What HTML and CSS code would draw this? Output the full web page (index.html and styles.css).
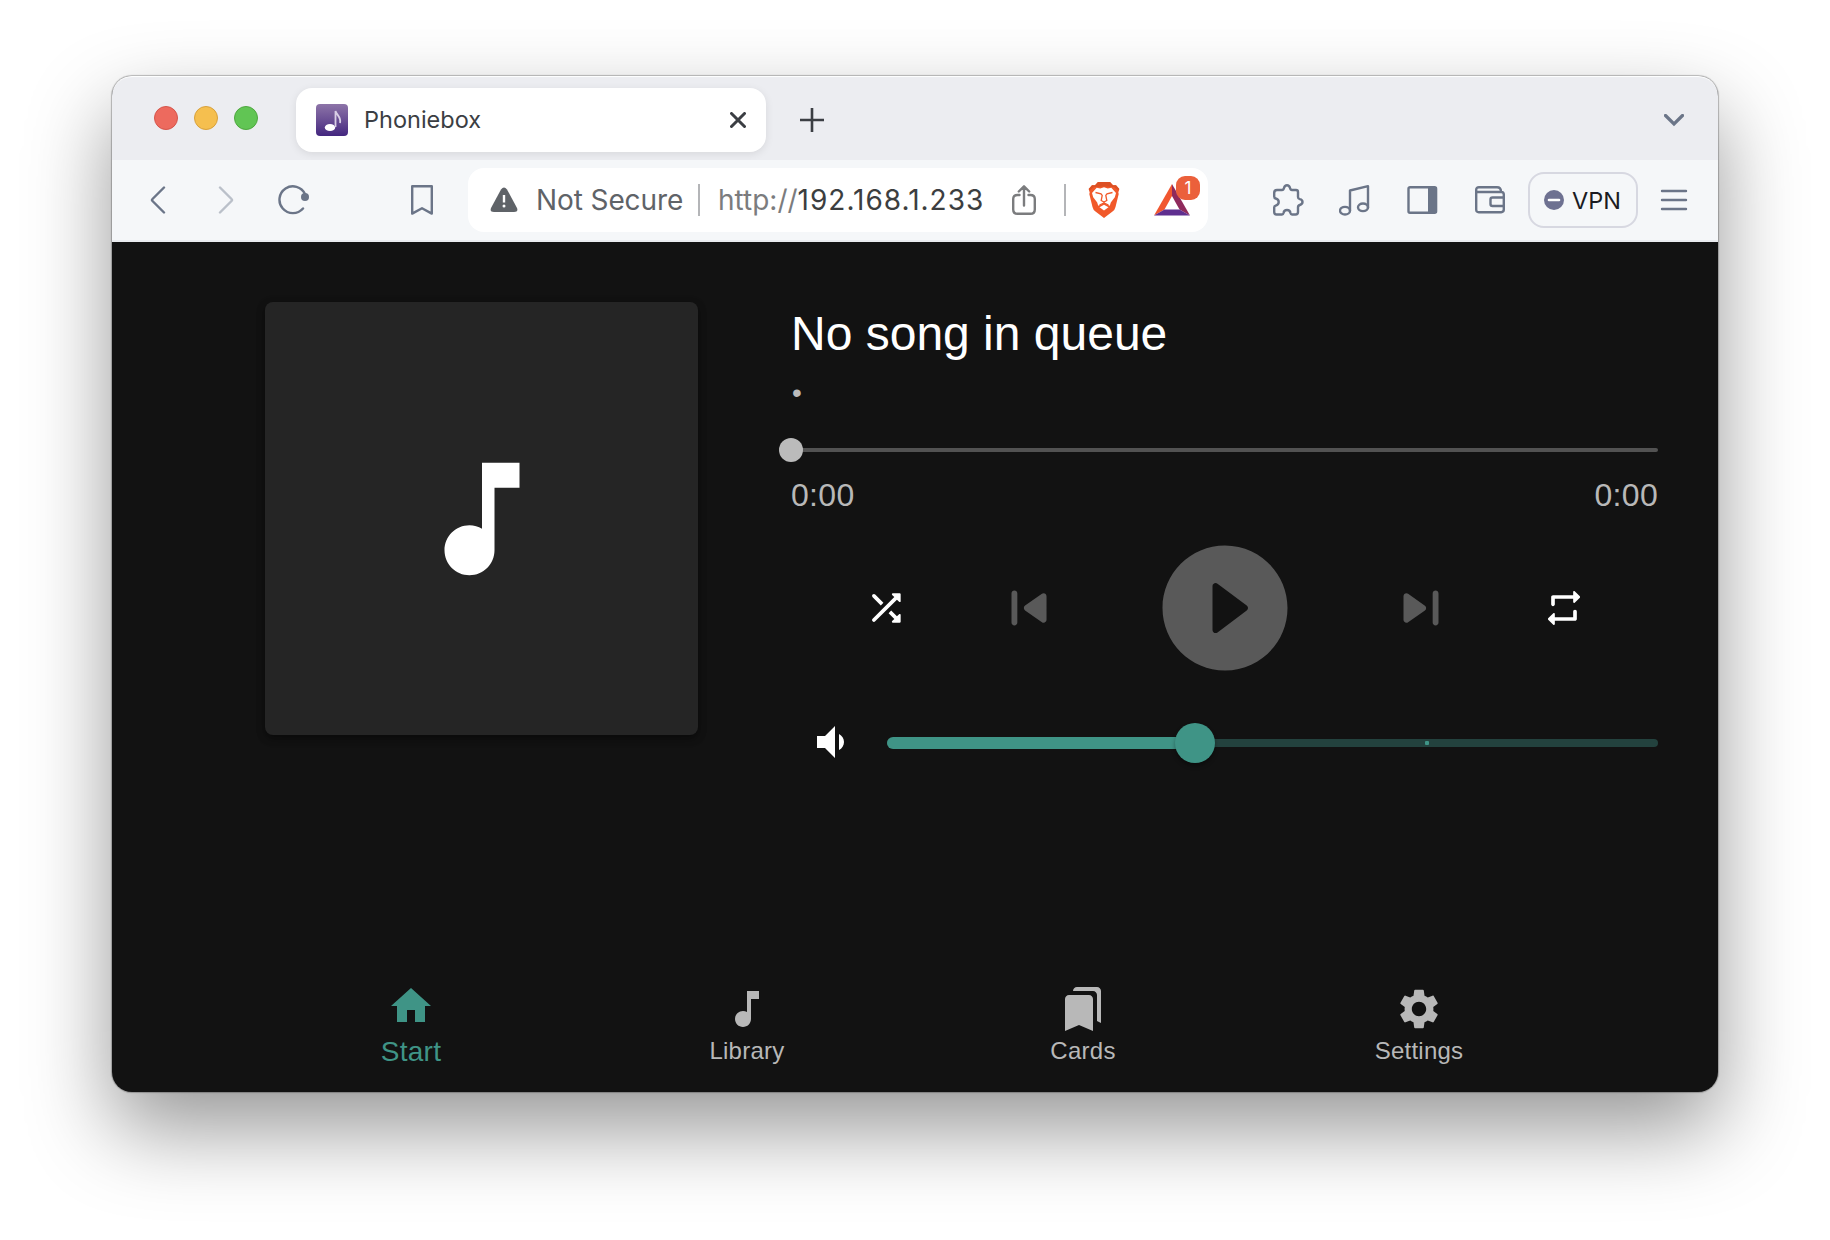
FILE: index.html
```html
<!DOCTYPE html>
<html lang="en">
<head>
<meta charset="utf-8">
<title>Phoniebox</title>
<link rel="stylesheet" href="styles.css">
</head>
<body>
<div class="window">
  <header class="tabs">
    <div class="lights"><i class="light red"></i><i class="light yellow"></i><i class="light green"></i></div>
    <div class="tab">
      <svg class="favicon" width="32" height="32" viewBox="0 0 32 32">
        <defs><linearGradient id="fav" x1="0" y1="0" x2="0" y2="1"><stop offset="0" stop-color="#8d74a8"/><stop offset=".5" stop-color="#6a4f94"/><stop offset="1" stop-color="#43267f"/></linearGradient></defs>
        <rect width="32" height="32" rx="4" fill="url(#fav)"/>
        <ellipse cx="14" cy="23.5" rx="5.2" ry="3.6" fill="#fff"/>
        <path d="M19.500 23V7c1 4 6 6 4.500 12" fill="none" stroke="#d9cfe6" stroke-width="1.800"/>
      </svg>
      <span class="tab-title">Phoniebox</span>
      <svg class="tab-close" width="16" height="16" viewBox="0 0 16 16"><path d="M1.500 1.500l13 13M14.500 1.500l-13 13"/></svg>
    </div>
    <svg class="plus" width="24" height="24" viewBox="0 0 24 24"><path d="M12 0v24M0 12h24"/></svg>
    <svg class="tab-menu" width="20" height="13" viewBox="0 0 20 13"><path d="M1.500 1.500l8.500 8.500 8.500-8.500"/></svg>
  </header>

  <div class="toolbar">
    <svg class="line back" width="16" height="28" viewBox="0 0 16 28"><path d="M14 1.500L2.500 13Q1.500 14 2.500 15L14 26.500"/></svg>
    <svg class="line forward" width="16" height="28" viewBox="0 0 16 28"><path d="M2 1.500L13.500 13Q14.500 14 13.500 15L2 26.500"/></svg>
    <svg class="line reload" width="32" height="30" viewBox="0 0 32 30"><path d="M25 23.500A13.400 13.400 0 1 1 27 9"/><circle cx="27" cy="12" r="4" class="solid"/></svg>
    <svg class="line bookmark" width="22" height="30" viewBox="0 0 22 30"><path d="M1.200 1.200h19.600v27.400L11 23.300l-9.800 5.300z"/></svg>

    <div class="address">
      <svg class="warn" width="28" height="26" viewBox="0 0 28 26"><path d="M11 2.500q3-4 6 0l10 18.500q1.500 4-3 4H4q-4.500 0-3-4z" fill="#5f6368"/><path d="M14 8v7.500" stroke="#fff" stroke-width="2.400"/><circle cx="14" cy="19" r="1.500" fill="#fff"/></svg>
      <span class="insecure">Not Secure</span>
      <i class="divider"></i>
      <span class="url"><span class="scheme">http://</span>192.168.1.233</span>
      <svg class="share" width="24" height="32" viewBox="0 0 24 32"><path d="M7.500 11H5.500Q1.200 11 1.200 15v10.500q0 4.300 4.300 4.300h13q4.300 0 4.300-4.300V15q0-4-4.300-4h-2M12 21.500V2.500M6.800 7.500L12 2.300l5.200 5.200"/></svg>
      <i class="divider second"></i>
      <svg class="lion" width="32" height="36" viewBox="0 0 32 36">
        <path d="M10 0h12l3 3.200h3L31.300 7l-1 3.500.4 1.500-3.200 13q-.7 3-3 4.600L16 36l-8.500-6.400q-2.300-1.600-3-4.600L1.300 12l.4-1.500L.7 7 4 3.200h3z" fill="#f1592a"/>
        <path d="M10 0h12l3 3.200h3L31.300 7l-1 1.500L26 5l-10-.5L6 5 1.700 8.500.7 7 4 3.200h3z" fill="#dc5024"/>
        <path d="M8.700 5.800l3.500.7L16 5.300l3.800 1.200 3.500-.7L28 11l-1.200 4.200-4 5.300-1 3.300-5.800-2.600-5.800 2.600-1-3.300-4-5.300L4 11z" fill="#fff"/>
        <path d="M7.500 10.500l5.500 1.300 1.200 1.700-1 5 2.800 1.500 2.800-1.500-1-5 1.200-1.700 5.500-1.300M16 20v3.500M11.500 23l4.500-2 4.500 2" fill="none" stroke="#f1592a" stroke-width="1.300"/>
        <path d="M11.500 25.200L16 22.800l4.500 2.400L16 28.500z" fill="#fff"/>
      </svg>
      <div class="rewards">
        <svg width="36" height="32" viewBox="0 0 36 32"><path d="M18 0L0 31.500 10.500 25.500 18 12z" fill="#f1562f"/><path d="M18 0v12l7.500 13.500L36 31.500z" fill="#8f2a5c"/><path d="M0 31.500l10.500-6h15l10.500 6z" fill="#5f2f8f"/></svg>
        <span class="badge">1</span>
      </div>
    </div>

    <div class="actions">
      <svg class="line" width="32" height="32" viewBox="0 0 32 32"><path d="M5 6h5q1.500 0 2-2 .7-2.800 3-2.800t3 2.800q.5 2 2 2h4q2 0 2 2v5q0 1.700 1.800 2.200 2.700.6 2.700 2.800t-2.700 3q-1.800.5-1.800 2.500v4.500q0 2.500-2.500 2.500H20q-1.200 0-1.500-1.500-.5-3-3.500-3t-3.500 3q-.3 1.500-1.500 1.500H4.500Q2.200 30.500 2.200 28v-4.500q0-1.300 1.500-1.800 3-1 3-3.700t-3-3.500q-1.500-.4-1.500-2V9Q2.200 6 5 6z"/></svg>
      <svg class="line" width="32" height="32" viewBox="0 0 32 32"><path d="M11 26.500V6.500l18-4.300v21.600"/><ellipse cx="6" cy="26.700" rx="5" ry="3.800"/><ellipse cx="24" cy="23.300" rx="5" ry="3.800"/></svg>
      <svg class="line" width="32" height="32" viewBox="0 0 32 32"><rect x="1.500" y="3.200" width="27.600" height="25.600" rx="1.500"/><path class="solid" d="M21 3h9v26h-9z"/></svg>
      <svg class="line" width="32" height="32" viewBox="0 0 32 32"><path d="M2.200 8h25q2.600 0 2.600 2.600v15q0 2.600-2.600 2.600H4.800q-2.600 0-2.600-2.600V5.700Q2.200 3.200 5 3.200h18q4 0 4 4.500M29.500 13.500h-11q-2 0-2 2V20q0 2 2 2h11"/></svg>
    </div>
    <div class="vpn"><svg width="20" height="20" viewBox="0 0 20 20"><circle cx="10" cy="10" r="10" fill="#6e7191"/><path d="M5 10h10" stroke="#fff" stroke-width="2.600" stroke-linecap="round"/></svg><span>VPN</span></div>
    <svg class="line burger" width="28" height="22" viewBox="0 0 28 22"><path d="M2 2h24M2 11h24M2 20h24"/></svg>
  </div>

  <main class="player">
    <div class="cover"><svg width="150" height="150" viewBox="0 0 24 24"><path d="M12 3v10.550c-.59-.34-1.270-.55-2-.55-2.210 0-4 1.790-4 4s1.790 4 4 4 4-1.790 4-4V7h4V3h-6z"/></svg></div>
    <section class="panel">
      <h1>No song in queue</h1>
      <p class="artist">•</p>
      <div class="seek"><i class="seek-thumb"></i></div>
      <div class="times"><span>0:00</span><span>0:00</span></div>
      <div class="controls">
        <svg width="44" height="44" viewBox="0 0 24 24"><path d="M10.590 9.170 6.120 4.700a.996.996 0 0 0-1.410 0c-.39.39-.39 1.020 0 1.410l4.460 4.460 1.420-1.400zm4.760-4.320 1.190 1.190L4.700 17.880c-.39.39-.39 1.020 0 1.410.39.39 1.020.39 1.410 0L17.960 7.460l1.190 1.190c.31.31.85.09.85-.36V4.500c0-.28-.22-.5-.5-.5h-3.790c-.45 0-.67.54-.36.85zm-.52 8.560-1.410 1.410 3.130 3.130-1.200 1.200c-.31.31-.09.85.36.85h3.790c.28 0 .5-.22.5-.5v-3.790c0-.45-.54-.67-.85-.35l-1.190 1.190-3.130-3.140z"/></svg>
        <svg class="off" width="70" height="70" viewBox="0 0 24 24"><path d="M7 6c.55 0 1 .45 1 1v10c0 .55-.45 1-1 1s-1-.45-1-1V7c0-.55.45-1 1-1zm3.660 6.820 5.770 4.070c.66.47 1.580-.01 1.580-.82V7.930c0-.81-.91-1.280-1.580-.82l-5.770 4.070c-.57.4-.57 1.240 0 1.640z"/></svg>
        <svg class="off" width="150" height="150" viewBox="0 0 24 24"><path d="M12 2C6.480 2 2 6.480 2 12s4.480 10 10 10 10-4.480 10-10S17.520 2 12 2zm-2 13.500v-7c0-.41.47-.65.8-.4l4.670 3.500c.27.2.27.6 0 .8l-4.670 3.500c-.33.25-.8.010-.8-.4z"/></svg>
        <svg class="off" width="70" height="70" viewBox="0 0 24 24"><path d="m7.580 16.890 5.770-4.070c.56-.4.56-1.240 0-1.630L7.580 7.110C6.910 6.650 6 7.120 6 7.930v8.140c0 .81.91 1.280 1.580.82zM16 7v10c0 .55.45 1 1 1s1-.45 1-1V7c0-.55-.45-1-1-1s-1 .45-1 1z"/></svg>
        <svg width="44" height="44" viewBox="0 0 24 24"><path d="M7 7h10v1.790c0 .45.54.67.85.35l2.790-2.790c.2-.2.2-.51 0-.71l-2.790-2.790c-.31-.31-.85-.09-.85.36V5H6c-.55 0-1 .45-1 1v4c0 .55.45 1 1 1s1-.45 1-1V7zm10 10H7v-1.790c0-.45-.54-.67-.85-.35l-2.790 2.790c-.2.2-.2.51 0 .71l2.790 2.790c.31.31.85.09.85-.36V19h11c.55 0 1-.45 1-1v-4c0-.55-.45-1-1-1s-1 .45-1 1v3z"/></svg>
      </div>
      <div class="volume">
        <svg width="48" height="48" viewBox="0 0 24 24"><path d="M18.500 12c0-1.770-1.020-3.290-2.500-4.030v8.050c1.480-.73 2.500-2.250 2.500-4.020zM5 9v6h4l5 5V4L9 9H5z"/></svg>
        <div class="rail"><i class="fill" style="width:40%"></i><i class="mark" style="left:70%"></i><i class="thumb" style="left:40%"></i></div>
      </div>
    </section>
  </main>

  <nav class="nav">
    <a class="active"><svg width="48" height="48" viewBox="0 0 24 24"><path d="M10 20v-6h4v6h5v-8h3L12 3 2 12h3v8z"/></svg>Start</a>
    <a><svg width="48" height="48" viewBox="0 0 24 24"><path d="M12 3v10.550c-.59-.34-1.270-.55-2-.55-2.210 0-4 1.790-4 4s1.790 4 4 4 4-1.790 4-4V7h4V3h-6z"/></svg>Library</a>
    <a><svg width="48" height="48" viewBox="0 0 24 24"><path d="m19 18 2 1V3c0-1.100-.9-2-2-2H8.990C7.890 1 7 1.900 7 3h10c1.100 0 2 .9 2 2v13zM15 5H5c-1.100 0-2 .9-2 2v16l7-3 7 3V7c0-1.100-.9-2-2-2z"/></svg>Cards</a>
    <a><svg width="48" height="48" viewBox="0 0 24 24"><path d="M19.140 12.940c.04-.3.060-.61.060-.94 0-.32-.02-.64-.07-.94l2.030-1.580c.18-.14.23-.41.12-.61l-1.920-3.320c-.12-.22-.37-.29-.59-.22l-2.390.96c-.5-.38-1.030-.7-1.620-.94l-.36-2.540c-.04-.24-.24-.41-.48-.41h-3.840c-.24 0-.43.17-.47.41l-.36 2.540c-.59.24-1.130.57-1.620.94l-2.390-.96c-.22-.08-.47 0-.59.22L2.740 8.870c-.12.21-.08.47.12.61l2.030 1.580c-.05.3-.09.63-.09.94s.02.64.07.94l-2.030 1.580c-.18.14-.23.41-.12.61l1.920 3.320c.12.22.37.29.59.22l2.390-.96c.5.38 1.030.7 1.620.94l.36 2.540c.05.24.24.41.48.41h3.840c.24 0 .44-.17.47-.41l.36-2.540c.59-.24 1.130-.56 1.620-.94l2.390.96c.22.08.47 0 .59-.22l1.920-3.320c.12-.22.07-.47-.12-.61l-2.010-1.580zM12 15.600c-1.980 0-3.600-1.620-3.600-3.600s1.620-3.600 3.600-3.600 3.600 1.620 3.600 3.600-1.620 3.600-3.600 3.600z"/></svg>Settings</a>
  </nav>
</div>
</body>
</html>
```
FILE: styles.css
```css
* { box-sizing: border-box; }

body {
  margin: 0;
  padding: 76px 112px 0;
  height: 1240px;
  overflow: hidden;
  background: #fff;
  font-family: Inter, "Liberation Sans", sans-serif;
}

svg, i { display: block; flex: none; }

.window {
  width: 1606px;
  height: 1016px;
  display: flex;
  flex-direction: column;
  border-radius: 20px;
  background: #121212;
  box-shadow: 0 0 1px 1px rgba(0, 0, 0, .25), 0 37px 84px rgba(0, 0, 0, .41);
}

.tabs {
  height: 84px;
  display: flex;
  align-items: center;
  padding: 4px 34px 0 42px;
  border-radius: 20px 20px 0 0;
  background: #ecedf1;
  box-shadow: inset 0 2px 1px -1px #fff;
}

.lights { display: flex; gap: 16px; margin: -4px 38px 0 0; }
.light { width: 24px; height: 24px; border-radius: 50%; border: 1px solid; }
.red { background: #ed6a5e; border-color: #d5554b; }
.yellow { background: #f5bf4f; border-color: #d8a13c; }
.green { background: #61c554; border-color: #4ea73f; }

.tab {
  width: 470px;
  height: 64px;
  display: flex;
  align-items: center;
  padding: 0 20px;
  border-radius: 16px;
  background: #fff;
  box-shadow: 0 2px 8px rgba(0, 0, 0, .09);
}
.tab-title { margin: 0 0 2px 16px; font-size: 23.500px; color: #3b3e43; }
.tab-close { margin-left: auto; stroke: #3b3e43; stroke-width: 3; stroke-linecap: round; }
.plus { margin-left: 34px; stroke: #3b3e43; stroke-width: 2.6; }
.tab-menu { margin-left: auto; fill: none; stroke: #6b7588; stroke-width: 3.2; stroke-linecap: round; }

.toolbar {
  height: 82px;
  display: flex;
  align-items: center;
  padding: 0 30px 0 38px;
  background: #f5f7f9;
  border-bottom: 2px solid #e9ebef;
}
.line { fill: none; stroke: #6b7588; stroke-width: 2.4; stroke-linecap: round; stroke-linejoin: round; }
.solid { fill: #6b7588; stroke: none; }
.forward { margin-left: 52px; opacity: .42; }
.reload { margin-left: 44px; }
.bookmark { margin-left: 101px; }

.address {
  flex: none;
  width: 740px;
  height: 64px;
  display: flex;
  align-items: center;
  margin-left: 35px;
  padding-left: 22px;
  border-radius: 16px;
  background: #fff;
  font-size: 28px;
}
.insecure { width: 162px; margin-left: 18px; color: #5f6368; letter-spacing: -.1px; white-space: nowrap; }
.divider { width: 2px; height: 32px; background: #b4b5b8; }
.url { width: 294px; margin-left: 18px; color: #3c3e40; letter-spacing: 1px; white-space: nowrap; }
.scheme { color: #7b7c7e; letter-spacing: 0; }
.share { fill: none; stroke: #7b7c7e; stroke-width: 2.4; stroke-linecap: round; stroke-linejoin: round; }
.second { margin-left: 28px; }
.lion { margin-left: 22px; }
.rewards { position: relative; margin-left: 34px; }
.badge {
  position: absolute;
  left: 22px;
  top: -8px;
  width: 24px;
  height: 24px;
  border-radius: 9px;
  background: #eb603b;
  color: #fff;
  font-size: 17px;
  line-height: 24px;
  text-align: center;
}

.actions { display: flex; gap: 35.333px; margin-left: 64px; }
.vpn {
  width: 110px;
  height: 56px;
  display: flex;
  align-items: center;
  gap: 8px;
  margin-left: 22px;
  padding-left: 14px;
  border: 2px solid #d7d8e1;
  border-radius: 16px;
  font-size: 23.500px;
  color: #1a1b22;
}
.burger { margin-left: 22px; }

.player {
  flex: 1;
  display: flex;
  align-items: flex-start;
  padding: 60px 60px 0 153px;
  font-family: "Liberation Sans", Arial, sans-serif;
  color: #fff;
}
.player svg { fill: #fff; }
.cover {
  width: 433px;
  height: 433px;
  display: grid;
  place-items: center;
  border-radius: 8px;
  background: #252525;
  box-shadow: 0 4px 8px rgba(0, 0, 0, .3), 0 2px 10px rgba(0, 0, 0, .24);
}
.panel { width: 867px; margin-left: 93px; }
h1 { margin: 0; font-size: 48px; font-weight: 400; line-height: 64px; }
.artist { margin: 7px 0 0 1px; font-size: 28px; line-height: 40px; color: #bbb; }
.seek {
  position: relative;
  height: 4px;
  margin-top: 35px;
  border-radius: 2px;
  background: #525252;
}
.seek-thumb {
  position: absolute;
  left: -12px;
  top: -10px;
  width: 24px;
  height: 24px;
  border-radius: 50%;
  background: #bbb;
}
.times {
  display: flex;
  justify-content: space-between;
  margin-top: 23px;
  font-size: 32px;
  line-height: 40px;
  letter-spacing: .3px;
  color: #b8b8b8;
}
.controls {
  display: grid;
  grid-template-columns: 44px 70px 150px 70px 44px;
  justify-content: center;
  column-gap: 86px;
  align-items: center;
  margin-top: 18px;
}
.player .off { fill: #595959; }
.volume { display: flex; align-items: center; margin: 35px 0 0 16px; }
.rail {
  position: relative;
  width: 771px;
  height: 8px;
  margin: 1px 0 0 32px;
  border-radius: 4px;
  background: #23423e;
}
.fill { position: absolute; left: 0; top: -2px; height: 12px; border-radius: 6px; background: #3f9486; }
.mark { position: absolute; top: 2px; width: 4px; height: 4px; margin-left: -2px; border-radius: 1px; background: #3f9486; }
.thumb {
  position: absolute;
  top: -16px;
  width: 40px;
  height: 40px;
  margin-left: -20px;
  border-radius: 50%;
  background: #3f9486;
  box-shadow: 0 3px 4px rgba(0, 0, 0, .35);
}

.nav {
  height: 112px;
  display: flex;
  padding: 0 131px;
  font-family: "Liberation Sans", Arial, sans-serif;
}
.nav a {
  width: 336px;
  display: flex;
  flex-direction: column;
  align-items: center;
  padding-top: 5px;
  font-size: 24px;
  line-height: 36px;
  letter-spacing: .25px;
  color: #b8b8b8;
  fill: #b8b8b8;
}
.nav .active { padding-top: 2px; font-size: 28px; line-height: 44px; color: #3f9486; fill: #3f9486; }
```
